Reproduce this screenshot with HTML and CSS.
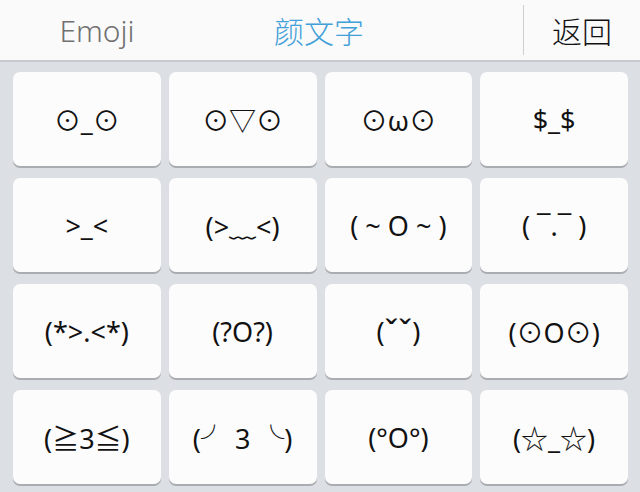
FILE: index.html
```html
<!DOCTYPE html>
<html lang="zh-CN">
<head>
    <meta charset="UTF-8">
    <meta name="viewport" content="width=device-width, initial-scale=1.0">
    <title>颜文字键盘</title>
    <link rel="stylesheet" href="styles.css">
</head>
<body>
    <div class="header">
        <div class="tab tab-emoji">Emoji</div>
        <div class="tab tab-kao active">颜文字</div>
        <div class="spacer"></div>
        <div class="divider"></div>
        <div class="back">返回</div>
    </div>

    <div class="keys">
        <div class="key">⊙_⊙</div>
        <div class="key">⊙▽⊙</div>
        <div class="key">⊙ω⊙</div>
        <div class="key">$_$</div>

        <div class="key">&gt;_&lt;</div>
        <div class="key">(&gt;﹏&lt;)</div>
        <div class="key">( ~ O ~ )</div>
        <div class="key">( ¯.¯ )</div>

        <div class="key">(*&gt;.&lt;*)</div>
        <div class="key">(?O?)</div>
        <div class="key">(<span class="caron">ˇˇ</span>)</div>
        <div class="key">(⊙O⊙)</div>

        <div class="key">(≧3≦)</div>
        <div class="key">(╯ 3 ╰)</div>
        <div class="key">(°O°)</div>
        <div class="key">(☆_☆)</div>
    </div>
</body>
</html>
```

FILE: styles.css
```css
body {
    margin: 0;
    padding: 0;
    width: 640px;
    height: 492px;
    overflow: hidden;
    background: #dcdfe3;
    font-family: "Noto Sans", "Noto Sans CJK SC", "DejaVu Sans", sans-serif;
}
.header {
    display: flex;
    align-items: center;
    height: 60px;
    background: #fafafa;
    border-bottom: 2px solid #c6c9cd;
}
.tab {
    text-align: center;
}
.tab-emoji {
    width: 194px;
    color: #707070;
    font-family: "Noto Sans", sans-serif;
    font-size: 30px;
    font-weight: 300;
}
.tab-kao {
    width: 250px;
    color: #42a0d8;
    font-family: "Noto Sans CJK SC", sans-serif;
    font-size: 30px;
    font-weight: 300;
}
.spacer {
    flex: 1;
}
.divider {
    width: 1px;
    height: 50px;
    background: #cfcfcf;
}
.back {
    width: 116px;
    text-align: center;
    font-size: 30px;
    font-weight: 300;
    color: #111;
    font-family: "Noto Sans CJK SC", sans-serif;
}
.keys {
    display: grid;
    grid-template-columns: repeat(4, 1fr);
    grid-auto-rows: 94px;
    gap: 12px 8px;
    padding: 10px 12px 0 13px;
}
.key {
    display: flex;
    align-items: center;
    justify-content: center;
    background: #fcfcfc;
    border-radius: 7px;
    box-shadow: 0 2px 0 #a9acb0;
    font-size: 27px;
    color: #111;
    white-space: pre;
}
.caron {
    font-size: 33px;
    line-height: 1;
    vertical-align: -3px;
}
```
